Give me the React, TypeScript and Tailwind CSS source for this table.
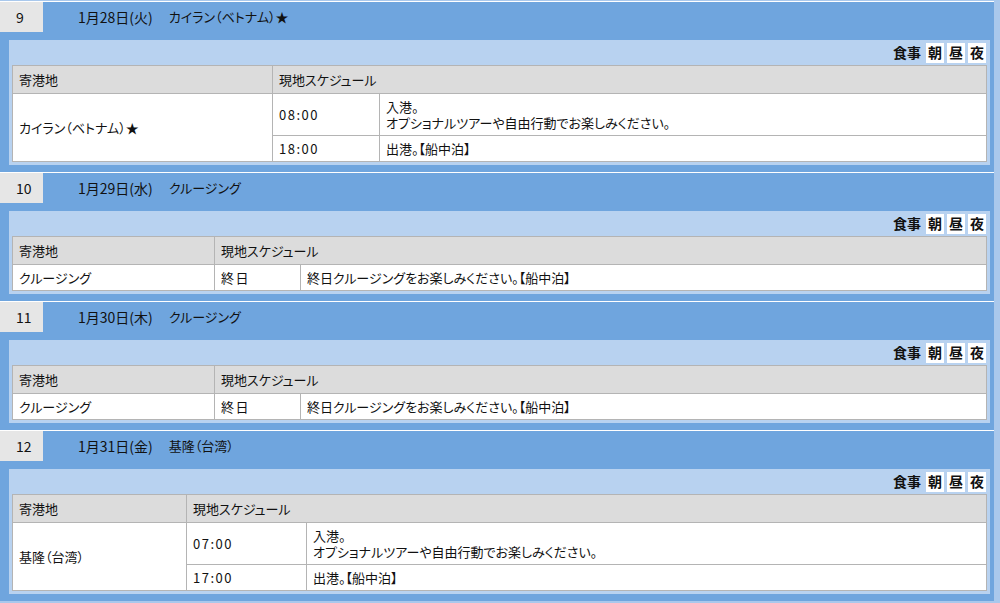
import React from 'react';

type Row = { time: string; lines: string[] };

type Day = {
  no: number;
  date: string;
  port: string;
  col1: string;
  col2: string;
  rows: Row[];
};

const DAYS: Day[] = [
  {
    no: 9,
    date: '1月28日(火)',
    port: 'カイラン（ベトナム）★',
    col1: 'w-[260px]',
    col2: 'w-[107px]',
    rows: [
      { time: '08:00', lines: ['入港。', 'オプショナルツアーや自由行動でお楽しみください。'] },
      { time: '18:00', lines: ['出港。【船中泊】'] },
    ],
  },
  {
    no: 10,
    date: '1月29日(水)',
    port: 'クルージング',
    col1: 'w-[202px]',
    col2: 'w-[86px]',
    rows: [{ time: '終日', lines: ['終日クルージングをお楽しみください。【船中泊】'] }],
  },
  {
    no: 11,
    date: '1月30日(木)',
    port: 'クルージング',
    col1: 'w-[202px]',
    col2: 'w-[86px]',
    rows: [{ time: '終日', lines: ['終日クルージングをお楽しみください。【船中泊】'] }],
  },
  {
    no: 12,
    date: '1月31日(金)',
    port: '基隆（台湾）',
    col1: 'w-[174px]',
    col2: 'w-[120px]',
    rows: [
      { time: '07:00', lines: ['入港。', 'オプショナルツアーや自由行動でお楽しみください。'] },
      { time: '17:00', lines: ['出港。【船中泊】'] },
    ],
  },
];

function MealBar() {
  return (
    <div className="flex h-[25px] items-center justify-end gap-[3px] pr-[1px] text-[14px] font-bold">
      <span className="mr-[2px]">食事</span>
      {['朝', '昼', '夜'].map(m => (
        <span key={m} className="flex h-[20px] w-[18px] items-center justify-center bg-white">
          {m}
        </span>
      ))}
    </div>
  );
}

function DayBlock({ day }: { day: Day }) {
  const cell = 'border border-[#b4b4b4] pl-[6px] p-0';
  return (
    <section className="w-[994px] border-t border-white bg-[#6fa5de] pb-[7px]">
      {/* Day header */}
      <div className="flex h-[30px] items-center">
        <div className="flex h-full w-[43px] items-center bg-[#e6e6e6] pl-[16px] text-[14px]">
          {day.no}
        </div>
        <div className="flex items-center pl-[35px]">
          <span className="text-[14px] [font-feature-settings:normal]">{day.date}</span>
          <span className="ml-[16px]">{day.port}</span>
        </div>
      </div>

      {/* Schedule panel */}
      <div className="mx-[9px] mt-[8px] w-[981px] bg-[#b8d2f0] px-[3px] pb-[3px]">
        <MealBar />
        <table className="w-full table-fixed border-collapse bg-white leading-[16px]">
          <colgroup>
            <col className={day.col1} />
            <col className={day.col2} />
            <col />
          </colgroup>
          <thead>
            <tr className="h-[28px] bg-[#dcdcdc] text-left">
              <th className={`${cell} font-normal`}>寄港地</th>
              <th colSpan={2} className={`${cell} font-normal`}>
                現地スケジュール
              </th>
            </tr>
          </thead>
          <tbody>
            {day.rows.map((row, i) => (
              <tr key={i} className={row.lines.length > 1 ? 'h-[42px]' : 'h-[26px]'}>
                {i === 0 && (
                  <td rowSpan={day.rows.length} className={cell}>
                    {day.port}
                  </td>
                )}
                <td className={`${cell} tracking-[1.5px]`}>{row.time}</td>
                <td className={cell}>
                  {row.lines.map(l => (
                    <div key={l}>{l}</div>
                  ))}
                </td>
              </tr>
            ))}
          </tbody>
        </table>
      </div>
    </section>
  );
}

export default function App() {
  return (
    <div
      className="min-h-[603px] w-[1000px] bg-[#a9c8ec] pt-[1px] text-[13px] text-[#111]"
      style={{
        fontFamily: '"Noto Sans CJK JP", "Noto Sans", sans-serif',
        fontFeatureSettings: '"palt"',
      }}
    >
      {DAYS.map(d => (
        <DayBlock key={d.no} day={d} />
      ))}
    </div>
  );
}
